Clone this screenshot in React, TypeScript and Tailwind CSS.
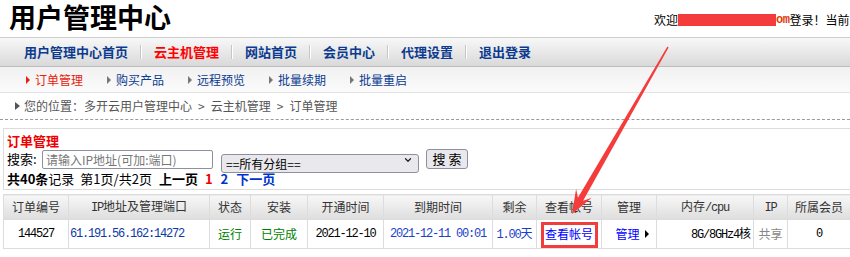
import { ChevronDown } from 'lucide-react';

const mono = "font-['Liberation_Mono','Noto_Sans_CJK_SC',monospace] tracking-[-1.2px]";

const navItems = ['用户管理中心首页', '云主机管理', '网站首页', '会员中心', '代理设置', '退出登录'];
const subItems = ['订单管理', '购买产品', '远程预览', '批量续期', '批量重启'];

const columns = [
  { label: '订单编号', w: 'w-[65px]' },
  { label: 'IP地址及管理端口', w: 'w-[141px]' },
  { label: '状态', w: 'w-[41px]' },
  { label: '安装', w: 'w-[57px]' },
  { label: '开通时间', w: 'w-[76px]' },
  { label: '到期时间', w: 'w-[109px]' },
  { label: '剩余', w: 'w-[44px]' },
  { label: '查看帐号', w: 'w-[65px]' },
  { label: '管理', w: 'w-[55px]' },
  { label: '内存/cpu', w: 'w-[97px]' },
  { label: 'IP', w: 'w-[34px]' },
  { label: '所属会员', w: 'w-[63px]' },
];

function Triangle({ red }: { red?: boolean }) {
  return (
    <span
      className={
        red
          ? 'inline-block w-0 h-0 border-y-[4px] border-y-transparent border-l-[4px] border-l-[#e8200c]'
          : 'inline-block w-0 h-0 border-y-[4px] border-y-transparent border-l-[4px] border-l-[#777]'
      }
    />
  );
}

export default function App() {
  return (
    <div className="relative w-[850px] h-[257px] overflow-hidden bg-white text-black font-['Noto_Sans_CJK_SC',sans-serif]">
      {/* top title */}
      <div className="flex h-[37px] items-start">
        <div className="w-[654px] shrink-0 pl-[9px] text-[27px] font-bold leading-[36px] -mt-[1px]">用户管理中心</div>
        <div className="shrink-0 whitespace-nowrap pt-[12px] text-[12px] leading-[16px] flex items-center">
          <span>欢迎</span>
          <span className="inline-block w-[98px] h-[12px] bg-[#f43c3c]" />
          <span className="font-['Liberation_Mono',monospace] font-bold text-[#e0400c] text-[12px] tracking-[-0.5px]">om</span>
          <span>登录！当前</span>
        </div>
      </div>

      {/* main nav */}
      <div className="flex h-[30px] items-center border-t border-[#cfcfcf] border-b border-b-[#bdbdbd] bg-gradient-to-b from-[#f8f8f8] to-[#d9d9d9] pl-[12px]">
        {navItems.map((item, i) => (
          <div key={item} className="flex items-center">
            {i > 0 && <span className="h-[14px] w-[2px] border-l border-[#c6c6c6] border-r border-r-white" />}
            <span
              className={
                i === 1
                  ? 'px-[12px] text-[13px] font-bold leading-[18px] text-[#f00]'
                  : 'px-[12px] text-[13px] font-bold leading-[18px] text-[#0b3b8f]'
              }
            >
              {item}
            </span>
          </div>
        ))}
      </div>

      {/* sub nav */}
      <div className="flex h-[26px] items-center border-b border-[#e3e3e3] bg-gradient-to-b from-[#f1f1f1] to-[#fbfbfb] pl-[26px]">
        {subItems.map((item, i) => (
          <div key={item} className="flex w-[81px] items-center gap-[5px]">
            <Triangle red={i === 0} />
            <span className={i === 0 ? 'text-[12px] leading-[16px] text-[#e8200c]' : 'text-[12px] leading-[16px] text-[#0b3b8f]'}>
              {item}
            </span>
          </div>
        ))}
      </div>

      {/* breadcrumb */}
      <div className="flex h-[27px] items-center border-b border-dashed border-[#9a9a9a] pl-[15px] text-[12px] leading-[16px] text-[#555]">
        <span className="inline-block w-0 h-0 border-y-[4px] border-y-transparent border-l-[5px] border-l-[#555]" />
        <span className="ml-[4px]">您的位置：多开云用户管理中心</span>
        <span className="mx-[6px]">&gt;</span>
        <span>云主机管理</span>
        <span className="mx-[6px]">&gt;</span>
        <span>订单管理</span>
      </div>

      {/* search box */}
      <div className="ml-[3px] mt-[8px] h-[62px] border border-r-0 border-[#dcdcdc] pl-[3px] pt-[3px]">
        <div className="text-[13px] font-bold leading-[17px] text-[#e00]">订单管理</div>
        <div className="flex h-[20px] items-center">
          <span className="w-[35px] shrink-0 whitespace-nowrap text-[13px] leading-[16px]">搜索:</span>
          <input
            className="h-[19px] w-[171px] shrink-0 rounded-[2px] border border-[#8f8f9d] bg-white px-[3px] text-[12px] leading-[16px] placeholder:text-[#777]"
            placeholder="请输入IP地址(可加:端口)"
          />
          <div className="relative ml-[8px] h-[19px] w-[198px] shrink-0">
            <select className="h-full w-full appearance-none rounded-[3px] border border-[#8f8f9d] bg-[#e9e9ed] pl-[4px] text-[12px] leading-[16px] text-black">
              <option>==所有分组==</option>
            </select>
            <ChevronDown className="pointer-events-none absolute right-[6px] top-[5px] h-[10px] w-[10px] text-[#222]" strokeWidth={3} />
          </div>
          <button className="ml-[7px] h-[20px] w-[42px] shrink-0 rounded-[3px] border border-[#8f8f9d] bg-[#e9e9ed] text-[13px] leading-[16px]">
            搜 索
          </button>
        </div>
        <div className="mt-[1px] flex items-center whitespace-nowrap text-[13px] leading-[17px]">
          <span className="font-bold">共40条</span>
          <span>记录</span>
          <span className="ml-[6px]">第1页/共2页</span>
          <span className="ml-[7px] font-bold">上一页</span>
          <span className="ml-[7px] font-bold text-[#e00]">1</span>
          <span className="ml-[8px] font-bold text-[#0033cc]">2</span>
          <span className="ml-[8px] font-bold text-[#0033cc]">下一页</span>
        </div>
      </div>

      {/* table */}
      <table className="ml-[3px] mt-[4px] w-[847px] table-fixed border-collapse text-[12px]">
        <thead>
          <tr>
            {columns.map((c) => (
              <th
                key={c.label}
                className={`${c.w} h-[25px] border border-[#dcdcdc] bg-gradient-to-b from-[#f7f7f7] to-[#dedede] p-0 text-center font-normal leading-[16px] text-[#333]`}
              >
                {c.label === '内存/cpu' ? (
                  <span>
                    内存<span className={mono}>/cpu</span>
                  </span>
                ) : c.label === 'IP' ? (
                  <span className={mono}>IP</span>
                ) : c.label === 'IP地址及管理端口' ? (
                  <span>
                    <span className={mono}>IP</span>地址及管理端口
                  </span>
                ) : (
                  c.label
                )}
              </th>
            ))}
          </tr>
        </thead>
        <tbody>
          <tr className="h-[29px]">
            <td className={`border border-[#dcdcdc] p-0 text-center ${mono}`}>144527</td>
            <td className={`border border-[#dcdcdc] p-0 pl-[1px] text-left text-[#0b3aa6] ${mono}`}>61.191.56.162:14272</td>
            <td className="border border-[#dcdcdc] p-0 text-center text-[#008000]">运行</td>
            <td className="border border-[#dcdcdc] p-0 text-center text-[#008000]">已完成</td>
            <td className={`border border-[#dcdcdc] p-0 text-center ${mono}`}>2021-12-10</td>
            <td className={`border border-[#dcdcdc] p-0 text-center text-[#1a3fcc] ${mono}`}>2021-12-11 00:01</td>
            <td className="border border-[#dcdcdc] p-0 text-center text-[#1a3fcc]">
              <span className={mono}>1.00</span>天
            </td>
            <td className="border border-[#dcdcdc] p-0 text-center text-[#0000ff]">查看帐号</td>
            <td className="border border-[#dcdcdc] p-0 pl-[6px] text-center">
              <span className="inline-flex items-center gap-[5px]">
                <span className="text-[#0000ff]">管理</span>
                <span className="inline-block w-0 h-0 border-y-[4px] border-y-transparent border-l-[4px] border-l-black" />
              </span>
            </td>
            <td className="border border-[#dcdcdc] p-0 pr-[2px] text-right">
              <span className={mono}>8G/8GHz4</span>核
            </td>
            <td className="border border-[#dcdcdc] p-0 text-center text-[#888]">共享</td>
            <td className={`border border-[#dcdcdc] p-0 text-center ${mono}`}>0</td>
          </tr>
        </tbody>
      </table>

      {/* annotation overlays */}
      <div className="pointer-events-none absolute left-[541px] top-[222px] h-[26px] w-[57px] border-[3px] border-[#f23d3d]" />
      <svg className="pointer-events-none absolute left-0 top-0" width="850" height="257" viewBox="0 0 850 257">
        <polygon
          points="668.6,47.4 583.1,200.8 591.8,197.7 572,214 576.1,188.7 577.9,197.8 667.4,46.6"
          fill="#f43c3c"
        />
      </svg>
    </div>
  );
}
